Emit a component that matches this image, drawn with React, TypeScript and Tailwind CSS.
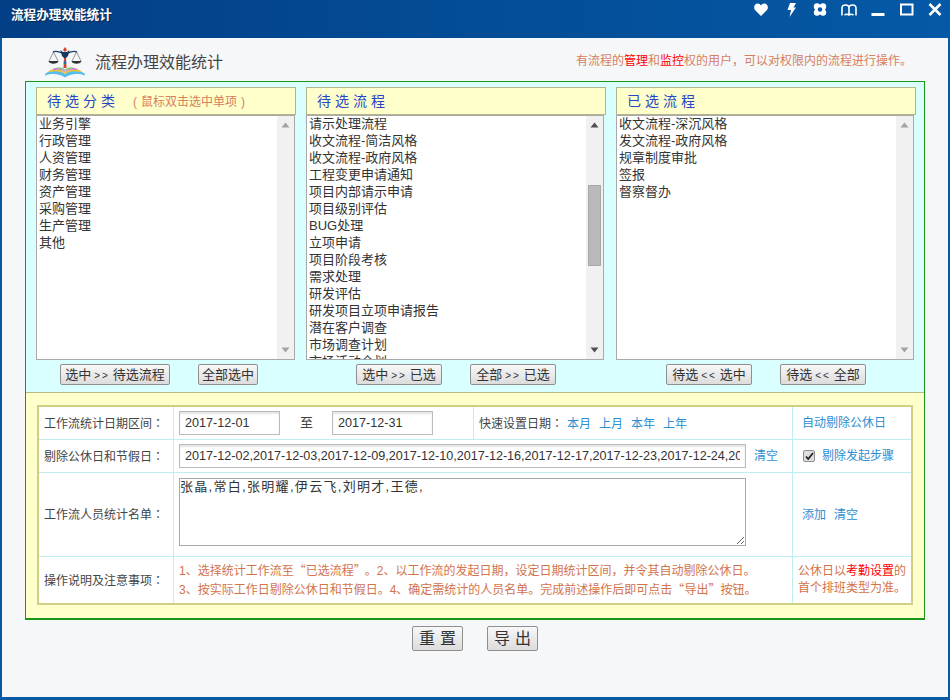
import React from "react";

const col1 = ["业务引擎", "行政管理", "人资管理", "财务管理", "资产管理", "采购管理", "生产管理", "其他"];
const col2 = ["请示处理流程", "收文流程-简洁风格", "收文流程-政府风格", "工程变更申请通知", "项目内部请示申请", "项目级别评估", "BUG处理", "立项申请", "项目阶段考核", "需求处理", "研发评估", "研发项目立项申请报告", "潜在客户调查", "市场调查计划", "市场活动企划"];
const col3 = ["收文流程-深沉风格", "发文流程-政府风格", "规章制度审批", "签报", "督察督办"];

function Arrow({ down, color }: { down?: boolean; color: string }) {
  return (
    <svg width="9" height="6" viewBox="0 0 9 6" className="block">
      <path d={down ? "M0.5 0.5H8.5L4.5 5.5Z" : "M4.5 0.5L8.5 5.5H0.5Z"} fill={color} />
    </svg>
  );
}

function ListBox({ items, width, scroll }: { items: string[]; width: string; scroll?: boolean }) {
  const arrow = scroll ? "#505050" : "#a3a3a3";
  return (
    <div className={`flex h-[245px] border border-[#a9a9a9] bg-white ${width}`}>
      <div className="min-w-0 flex-1 overflow-hidden pl-[2px]">
        <div className="mt-[-1px]">
          {items.map((t) => (
            <div key={t} className="h-[17px] text-[13px] leading-[17px] whitespace-nowrap text-[#333]">{t}</div>
          ))}
        </div>
      </div>
      <div className="flex w-[17px] shrink-0 flex-col items-center bg-[#f1f1f1] pt-[6px] pb-[6px]">
        <Arrow color={arrow} />
        {scroll ? (
          <div className="mt-[57px] h-[81px] w-[13px] border border-[#a8a8a8] bg-[#b9b9b9]" />
        ) : null}
        <div className="mt-auto">
          <Arrow down color={arrow} />
        </div>
      </div>
    </div>
  );
}

function Btn({ left, mark, right, width }: { left: string; mark?: string; right?: string; width: string }) {
  return (
    <button className={`h-[21px] rounded-[2px] border border-[#8f8f8f] bg-gradient-to-b from-[#f8f8f8] to-[#dcdcdc] text-center text-[13px] leading-[19px] whitespace-nowrap text-[#333] ${width}`}>
      {left}
      {mark ? <span className="mx-[3px] text-[10px] tracking-[2px]">{mark}</span> : null}
      {right}
    </button>
  );
}

function Head({ title, width, hint }: { title: string; width: string; hint?: string }) {
  return (
    <div className={`flex h-[28px] items-center border border-[#b4b48c] bg-[#ffffcc] pt-[1px] pl-[10px] ${width}`}>
      <span className="text-[14px] tracking-[4px] text-[#2747c8]">{title}</span>
      {hint ? (
        <span className="ml-[14px] text-[12px] text-[#d5805e]">
          <span className="mr-[4px]">(</span>
          {hint}
          <span className="ml-[4px]">)</span>
        </span>
      ) : null}
    </div>
  );
}

function Logo() {
  return (
    <svg width="42" height="31" viewBox="0 0 42 31" className="shrink-0">
      <path d="M9 5 C13 3 16 5 20 7 M22 7 C26 5 29 3 33 5" stroke="#1d3f6a" strokeWidth="1.4" fill="none" />
      <path d="M9.5 5 L5 14 M9.5 5 L14 14 M32.5 5 L28 14 M32.5 5 L37 14" stroke="#6a6a6a" strokeWidth="0.7" fill="none" />
      <path d="M4.5 14 H14.5 C14 17.5 5 17.5 4.5 14Z M27.5 14 H37.5 C37 17.5 28 17.5 27.5 14Z" fill="#333" />
      <path d="M21 0 L23 3 L21 5 L19 3Z" fill="#d8412b" />
      <path d="M16.5 3 L19 5 H23 L25.5 3 L24 9 L22 11 H20 L18 9Z" fill="#16395f" />
      <path d="M20 11 H22 L22.5 21 H19.5Z" fill="#d2402a" />
      <rect x="19.8" y="14" width="2.4" height="3" fill="#2a6bb0" />
      <path d="M1 27 C8 22 16 23 21 27 C26 23 34 22 41 27 L41 28.5 C33 26 26 27 21 30.5 C16 27 9 26 1 28.5Z" fill="#57bdea" />
      <path d="M4 24.5 C10 20.5 17 22 21 25.5 C25 22 32 20.5 38 24.5 L35 25 C30 23.5 25 24.5 21 27 C17 24.5 12 23.5 7 25Z" fill="#e6c23f" />
      <path d="M8 22.5 C12 20 18 21 21 24 C24 21 30 20 34 22.5 L31 23 C27 22 24 23 21 25 C18 23 15 22 11 23Z" fill="#c77ad2" />
      <path d="M12 21 C15 19.5 19 20.5 21 22.5 C23 20.5 27 19.5 30 21 L27 21.5 C25 21.3 23 22 21 23.5 C19 22 17 21.3 15 21.5Z" fill="#7fce7a" />
    </svg>
  );
}

const cjk = "font-['Noto_Sans_CJK_SC',sans-serif]";
function Colon() {
  return <span className="font-['Noto_Sans_CJK_TC',sans-serif]">：</span>;
}

const cell = "border-r border-b border-[#bdeef0] align-middle";
const link = "text-[#2b8ed2]";
const field = "h-[24px] border border-[#bbbbbb] bg-white pr-[5px] pl-[5px] text-[12.6px] text-[#333] shadow-[inset_0_2px_2px_#e4e4e4] outline-none";
const bigBtn = "h-[25px] w-[51px] rounded-[2px] border border-[#8f8f8f] bg-gradient-to-b from-[#f8f8f8] to-[#dcdcdc] pl-[5px] text-[16px] leading-[23px] tracking-[5px] text-[#333]";

export default function App() {
  return (
    <div className="flex h-[700px] w-[950px] flex-col bg-[#0559a5] font-['Liberation_Sans','Noto_Sans_CJK_SC',sans-serif] text-[12px] text-[#444]">
      <header className="flex h-[38px] shrink-0 bg-gradient-to-r from-[#033f86] to-[#0559a6] pt-[6px] pl-[11px]">
        <span className="h-[18px] text-[12.6px] leading-[18px] font-bold text-white [text-shadow:1px_1px_1px_#0a2a50]">流程办理效能统计</span>
        <div className="ml-auto flex h-[18px] items-start pr-[8px] text-white">
          <svg width="14" height="13" viewBox="0 0 14 13" className="mt-[-3px]" fill="white"><path d="M7 13 L1 7 C-1 4.5 0.5 0.5 3.8 0.5 C5.2 0.5 6.3 1.2 7 2.5 C7.7 1.2 8.8 0.5 10.2 0.5 C13.5 0.5 15 4.5 13 7Z" /></svg>
          <svg width="9" height="14" viewBox="0 0 9 14" className="mt-[-3px] ml-[19px]" fill="white"><path d="M3 0 H9 L6.5 4.5 H9 L2.5 14 L4 7 H0.5Z" /></svg>
          <svg width="14" height="13" viewBox="0 0 14 13" className="mt-[-3px] ml-[17px]">
            <circle cx="4" cy="3.5" r="3.2" fill="white" />
            <circle cx="10" cy="3.5" r="3.2" fill="white" />
            <circle cx="4" cy="9.5" r="3.2" fill="white" />
            <circle cx="10" cy="9.5" r="3.2" fill="white" />
            <rect x="2" y="2" width="10" height="9" fill="white" />
            <circle cx="7" cy="6.5" r="2.2" fill="#0559a5" />
          </svg>
          <svg width="16" height="12" viewBox="0 0 16 12" className="mt-[-2px] ml-[14px]" fill="none" stroke="white" strokeWidth="1.6"><path d="M1 11.5 V4 C1 1 3 1 4.5 1 C6.5 1 8 2 8 4 V11 M8 4 C8 2 9.5 1 11.5 1 C13 1 15 1 15 4 V11.5 M3.5 11 C5 10 6.5 10 8 11 C9.5 10 11 10 12.5 11" /></svg>
          <svg width="14" height="13" viewBox="0 0 14 13" className="mt-[-2px] ml-[14px]"><rect x="0.5" y="9" width="13" height="3" fill="white" /></svg>
          <svg width="14" height="13" viewBox="0 0 14 13" className="mt-[-3px] ml-[15px]" fill="none" stroke="white"><rect x="1" y="1.5" width="11.5" height="10" strokeWidth="2" /></svg>
          <svg width="14" height="13" viewBox="0 0 14 13" className="mt-[-3px] ml-[14px]" fill="none" stroke="white" strokeWidth="2.6"><path d="M1.5 1 L12.5 12 M12.5 1 L1.5 12" /></svg>
        </div>
      </header>

      <main className="mx-[2px] mb-[3px] flex flex-1 flex-col bg-[#f6f7f9]">
        <div className="flex h-[43px] shrink-0 items-start pt-[9px] pr-[36px] pl-[42px]">
          <Logo />
          <span className="mt-[5px] ml-[9px] text-[16px] leading-[22px] text-[#444]">流程办理效能统计</span>
          <span className="mt-[5px] ml-auto text-[12px] leading-[18px] text-[#d5805e]">
            有流程的<span className="text-[#ff0000]">管理</span>和<span className="text-[#ff0000]">监控</span>权的用户，可以对权限内的流程进行操作。
          </span>
        </div>

        <div className="mx-[23px] flex h-[539px] flex-col border-x border-t border-b-2 border-x-[#1a961a] border-t-[#1a961a] border-b-[#1a961a]">
          <section className="h-[311px] shrink-0 border-b border-[#b8b880] bg-[#d9ffff] pt-[5px] pl-[10px]">
            <div className="flex gap-[10px]">
              <div className="w-[260px]">
                <Head title="待选分类" width="w-[260px]" hint="鼠标双击选中单项" />
                <ListBox items={col1} width="w-[259px]" />
                <div className="mt-[4px] flex gap-[28px] pl-[24px]">
                  <Btn width="w-[110px]" left="选中" mark=">>" right="待选流程" />
                  <Btn width="w-[60px]" left="全部选中" />
                </div>
              </div>
              <div className="w-[300px]">
                <Head title="待选流程" width="w-[300px]" />
                <ListBox items={col2} width="w-[298px]" scroll />
                <div className="mt-[4px] flex gap-[28px] pl-[50px]">
                  <Btn width="w-[86px]" left="选中" mark=">>" right="已选" />
                  <Btn width="w-[86px]" left="全部" mark=">>" right="已选" />
                </div>
              </div>
              <div className="w-[300px]">
                <Head title="已选流程" width="w-[300px]" />
                <ListBox items={col3} width="w-[298px]" />
                <div className="mt-[4px] flex gap-[28px] pl-[50px]">
                  <Btn width="w-[86px]" left="待选" mark="<<" right="选中" />
                  <Btn width="w-[86px]" left="待选" mark="<<" right="全部" />
                </div>
              </div>
            </div>
          </section>

          <section className="flex-1 bg-[#ffffcc] pt-[12px] pl-[11px]">
            <table className="w-[876px] table-fixed border-separate border-spacing-0 border-2 border-[#cfcf86] bg-white">
              <colgroup>
                <col className="w-[135px]" />
                <col className="w-[300px]" />
                <col className="w-[319px]" />
                <col className="w-[118px]" />
              </colgroup>
              <tbody>
                <tr className="h-[33px]">
                  <td className={`${cell} pl-[5px]`}>工作流统计日期区间<Colon /></td>
                  <td className={`${cell} pl-[5px]`}>
                    <div className="flex items-center">
                      <input readOnly value="2017-12-01" className={`${field} w-[101px]`} />
                      <span className="mr-[19px] ml-[20px] text-[13px]">至</span>
                      <input readOnly value="2017-12-31" className={`${field} w-[101px]`} />
                    </div>
                  </td>
                  <td className={`${cell} pl-[5px]`}>
                    快速设置日期<Colon />
                    <span className={`${link} ml-[4px]`}>本月</span>
                    <span className={`${link} ml-[8px]`}>上月</span>
                    <span className={`${link} ml-[8px]`}>本年</span>
                    <span className={`${link} ml-[8px]`}>上年</span>
                  </td>
                  <td className="border-b border-[#bdeef0] pl-[9px] text-[#2b8ed2]">自动剔除公休日</td>
                </tr>
                <tr className="h-[33px]">
                  <td className={`${cell} pl-[5px]`}>剔除公休日和节假日<Colon /></td>
                  <td colSpan={2} className={`${cell} pl-[5px]`}>
                    <div className="flex items-center">
                      <input readOnly value="2017-12-02,2017-12-03,2017-12-09,2017-12-10,2017-12-16,2017-12-17,2017-12-23,2017-12-24,2017-12-30,2017-12-31" className={`${field} w-[567px]`} />
                      <span className={`${link} ml-[8px]`}>清空</span>
                    </div>
                  </td>
                  <td className="border-b border-[#bdeef0] pl-[10px]">
                    <div className="flex items-center">
                      <span className="flex h-[12px] w-[12px] items-center justify-center rounded-[2px] border border-[#8e8e8e] bg-[#dedede]">
                        <svg width="9" height="8" viewBox="0 0 9 8"><path d="M1 4.5 L3.2 7 L8 1" stroke="#222" strokeWidth="1.8" fill="none" /></svg>
                      </span>
                      <span className={`${link} ml-[7px]`}>剔除发起步骤</span>
                    </div>
                  </td>
                </tr>
                <tr className="h-[84px]">
                  <td className={`${cell} pl-[5px]`}>工作流人员统计名单<Colon /></td>
                  <td colSpan={2} className="border-r border-b border-[#bdeef0] pt-[5px] pl-[5px] align-top">
                    <textarea readOnly value="张晶,常白,张明耀,伊云飞,刘明才,王德," className="block h-[68px] w-[567px] border border-[#a9a9a9] bg-white text-[13px] leading-[16px] tracking-[1.3px] text-[#333] outline-none" />
                  </td>
                  <td className="border-b border-[#bdeef0] pl-[9px]">
                    <span className={link}>添加</span>
                    <span className={`${link} ml-[8px]`}>清空</span>
                  </td>
                </tr>
                <tr className="h-[46px]">
                  <td className="border-r border-[#bdeef0] pl-[5px]">操作说明及注意事项<Colon /></td>
                  <td colSpan={2} className="border-r border-[#bdeef0] pl-[5px] leading-[17px] whitespace-nowrap text-[#d2734c]">
                    1、选择统计工作流至<span className={cjk}>“</span>已选流程<span className={`${cjk} mr-[5px]`}>”</span>。2、以工作流的发起日期，设定日期统计区间，并令其自动剔除公休日。
                    <br />
                    3、按实际工作日剔除公休日和节假日。4、确定需统计的人员名单。完成前述操作后即可点击<span className={cjk}>“</span>导出<span className={cjk}>”</span>按钮。
                  </td>
                  <td className="pl-[5px] leading-[17px] text-[#d2734c]">
                    公休日以<span className="text-[#ff0000]">考勤设置</span>的
                    <br />
                    首个排班类型为准。
                  </td>
                </tr>
              </tbody>
            </table>
          </section>
        </div>

        <div className="mt-[6px] flex gap-[24px] pl-[410px]">
          <button className={bigBtn}>重置</button>
          <button className={bigBtn}>导出</button>
        </div>
      </main>
    </div>
  );
}
